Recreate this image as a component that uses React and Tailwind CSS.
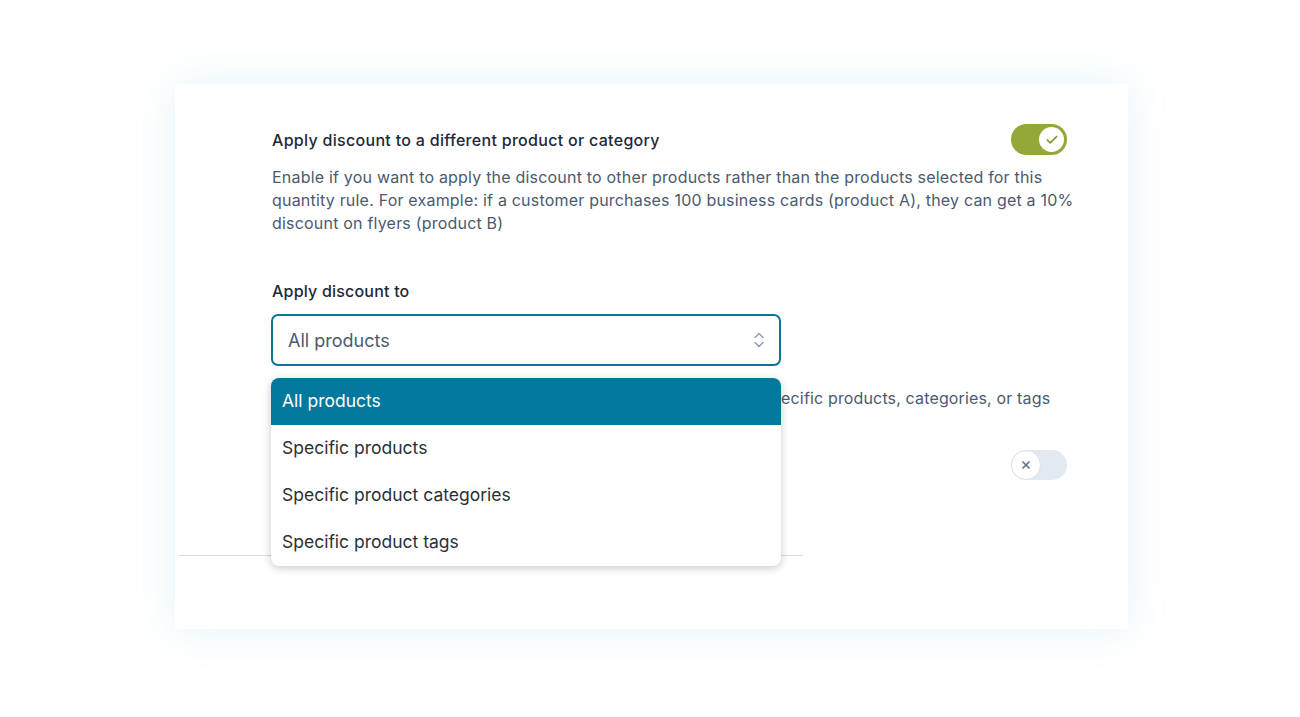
import { Check, X } from 'lucide-react'

const options = ['All products', 'Specific products', 'Specific product categories', 'Specific product tags']

function Toggle({ on }) {
  return on ? (
    <div className="w-[56px] h-[31px] rounded-full bg-[#92a838] flex items-center justify-end p-[3px]">
      <div className="w-[25px] h-[25px] rounded-full bg-white flex items-center justify-center">
        <Check className="w-[14px] h-[14px] text-[#7f9a2a]" strokeWidth={3} />
      </div>
    </div>
  ) : (
    <div className="w-[56px] h-[30px] rounded-full bg-[#e3e9f1] flex items-center justify-start">
      <div className="w-[30px] h-[30px] rounded-full bg-white border border-[#dbe2ec] flex items-center justify-center">
        <X className="w-[12px] h-[12px] text-[#64748b]" strokeWidth={3.5} />
      </div>
    </div>
  )
}

export default function App() {
  return (
    <div className="w-[1300px] h-[717px] bg-white flex items-center justify-center pl-[3px] pb-[4px] font-['Inter','Liberation_Sans',sans-serif]">
      <div className="w-[953px] h-[545px] bg-white shadow-[0_0_40px_rgba(56,178,210,0.14)] pt-[40px] pl-[97px] pr-[61px]">
        <div className="flex items-center justify-between">
          <h2 className="text-[16px] font-medium text-[#1e293b] tracking-[0.3px]">Apply discount to a different product or category</h2>
          <Toggle on />
        </div>
        <p className="mt-[11px] w-[815px] text-[16px] leading-[23px] text-[#4b5a6e] tracking-[0.2px]">
          Enable if you want to apply the discount to other products rather than the products selected for this quantity rule. For example: if a customer purchases 100 business cards (product A), they can get a 10% discount on flyers (product B)
        </p>

        <div className="mt-[44px] text-[16px] leading-[24px] font-medium text-[#1e293b] tracking-[0.2px]">Apply discount to</div>
        <div className="relative mt-[11px] -ml-[1px] w-[510px]">
          <div className="h-[52px] rounded-[7px] border-2 border-[#0b7497] flex items-center justify-between pl-[15px] pr-[14px]">
            <span className="text-[18px] text-[#4b5a6e]">All products</span>
            <svg width="12" height="18" viewBox="0 0 12 18" fill="none" stroke="#8a98ab" strokeWidth="1.4" strokeLinecap="round" strokeLinejoin="round">
              <path d="M2 6.5 L6 2.5 L10 6.5" />
              <path d="M2 11.5 L6 15.5 L10 11.5" />
            </svg>
          </div>
          <div className="absolute left-0 top-[64px] w-[510px] bg-white rounded-[8px] overflow-hidden shadow-[0_2px_8px_rgba(0,0,0,0.22)] z-10">
            {options.map((o, i) => (
              <div key={o} className={`h-[47px] flex items-center pl-[11px] text-[17.5px] ${i === 0 ? 'bg-[#02789d] text-white' : 'text-[#2a3038]'}`}>
                {o}
              </div>
            ))}
          </div>
        </div>
        <p className="mt-[21px] text-[16px] leading-[23px] text-[#4b5a6e] tracking-[0.15px] whitespace-nowrap">
          Select whether the discount is applied to all products or only to specific products, categories, or tags
        </p>

        <div className="mt-[40px] flex items-center justify-between">
          <h2 className="text-[16px] font-medium text-[#1e293b]">Limit the discounted quantity</h2>
          <Toggle />
        </div>

        <div className="mt-[75px] -ml-[94px] w-[625px] border-t border-[#d9dde2]" />
      </div>
    </div>
  )
}
